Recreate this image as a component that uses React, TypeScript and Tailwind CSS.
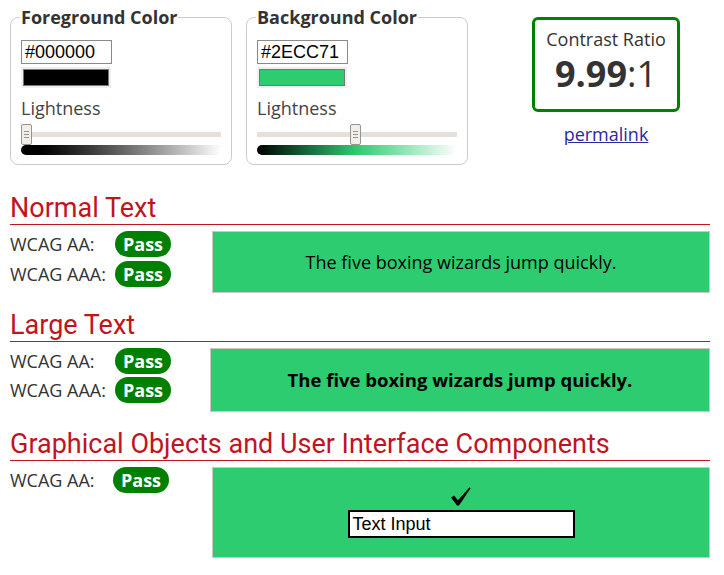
import React from 'react'

const sans = "font-['Open_Sans','Noto_Sans',sans-serif]"
const heading = "font-['Roboto','Liberation_Sans',sans-serif]"
const arial = "font-['Liberation_Sans',Arial,sans-serif]"

function Thumb({ left }: { left: number }) {
  return (
    <div
      className="absolute top-0 w-[11px] h-[21px] bg-[#f1eeea] border border-[#9a948e] rounded-[2px] flex flex-col items-center justify-center gap-[2px]"
      style={{ left }}
    >
      <span className="block w-[5px] h-px bg-[#9a948e]" />
      <span className="block w-[5px] h-px bg-[#9a948e]" />
      <span className="block w-[5px] h-px bg-[#9a948e]" />
    </div>
  )
}

function ColorBox({
  title,
  hex,
  swatch,
  thumbLeft,
  gradient,
  className = '',
}: {
  title: string
  hex: string
  swatch: string
  thumbLeft: number
  gradient: string
  className?: string
}) {
  return (
    <fieldset className={`w-[222px] min-w-0 border border-[#cccccc] rounded-[8px] px-[10px] pt-[11px] pb-[9px] m-0 ${className}`}>
      <legend className="px-[1px] -ml-[1px] text-[18px] leading-[23px] font-bold text-[#333]">{title}</legend>
      <div className={`w-[91px] h-[24px] border border-[#8a8a8a] bg-white px-[3px] text-[18px] leading-[22px] text-black ${arial}`}>
        {hex}
      </div>
      <div className="mt-[3px] w-[90px] h-[21px] bg-[#efefef] p-[2px]">
        <div className="w-full h-full border border-[#767676]" style={{ background: swatch }} />
      </div>
      <div className="mt-[8px] text-[18px] leading-[24px] text-[#444]">Lightness</div>
      <div className="relative mt-[4px] w-[200px] h-[31px]">
        <div className="absolute left-0 right-0 top-[8px] h-[5px] bg-[#e5e0da]" />
        <div className={`absolute left-0 right-0 top-[21px] h-[10px] rounded-l-full ${gradient}`} />
        <Thumb left={thumbLeft} />
      </div>
    </fieldset>
  )
}

function Pass() {
  return (
    <span className="inline-flex items-center justify-center w-[56px] h-[26px] rounded-full bg-[#008000] text-white font-bold text-[18px]">
      Pass
    </span>
  )
}

function Row({ label, labelW = 'w-[105px]' }: { label: string; labelW?: string }) {
  return (
    <div className="flex items-center h-[26px]">
      <span className={`${labelW} text-[18px] text-[#333]`}>{label}</span>
      <Pass />
    </div>
  )
}

function SectionTitle({ children }: { children: React.ReactNode }) {
  return (
    <h2 className={`${heading} text-[27px] leading-[30px] text-[#c0141e] pb-px border-b border-[#c0141e]`}>
      {children}
    </h2>
  )
}

function Check() {
  return (
    <svg width="20" height="19" viewBox="0 0 20 19" className="block">
      <path d="M0 10.5 L3.2 8.6 L6.8 13.2 L18.6 0.2 L19.6 1.2 L8 18.4 L6 18.4 Z" fill="#000" />
    </svg>
  )
}

export default function App() {
  return (
    <div className={`${sans} w-[724px] h-[575px] bg-white pl-[10px] pt-[6px] overflow-hidden`}>
      <div className="w-[700px]">
        <div className="flex items-start">
          <ColorBox title="Foreground Color" hex="#000000" swatch="#000000" thumbLeft={0} gradient="bg-gradient-to-r from-black to-white" />
          <ColorBox
            title="Background Color"
            hex="#2ECC71"
            swatch="#2ecc71"
            thumbLeft={93}
            gradient="bg-[linear-gradient(to_right,#000000,#2ecc71_50%,#ffffff)]"
            className="ml-[14px]"
          />
          <div className="ml-[64px] mt-[11px] flex flex-col items-center">
            <div className="w-[148px] h-[95px] border-[3px] border-[#008000] rounded-[6px] flex flex-col items-center pt-[8px]">
              <div className="text-[18px] leading-[23px] text-[#333]">Contrast Ratio</div>
              <div className="text-[36px] leading-[46px] text-[#333]">
                <span className="font-bold">9.99</span>:1
              </div>
            </div>
            <a href="#" className="mt-[10px] text-[18px] leading-[24px] text-[#2a2a9c] underline">
              permalink
            </a>
          </div>
        </div>

        <section className="mt-[28px]">
          <SectionTitle>Normal Text</SectionTitle>
          <div className="flex mt-[6px]">
            <div className="w-[202px] flex flex-col gap-[4px]">
              <Row label="WCAG AA:" />
              <Row label="WCAG AAA:" />
            </div>
            <div className="w-[498px] h-[62px] border border-[#c8c8c8] bg-[#2ecc71] flex items-center justify-center text-[18px] text-black">
              The five boxing wizards jump quickly.
            </div>
          </div>
        </section>

        <section className="mt-[17px]">
          <SectionTitle>Large Text</SectionTitle>
          <div className="flex mt-[6px]">
            <div className="w-[200px] flex flex-col gap-[3px]">
              <Row label="WCAG AA:" />
              <Row label="WCAG AAA:" />
            </div>
            <div className="w-[500px] h-[64px] border border-[#c8c8c8] bg-[#2ecc71] flex items-center justify-center text-[18.5px] font-bold text-black">
              The five boxing wizards jump quickly.
            </div>
          </div>
        </section>

        <section className="mt-[17px]">
          <SectionTitle>Graphical Objects and User Interface Components</SectionTitle>
          <div className="flex mt-[6px]">
            <div className="w-[202px]">
              <Row label="WCAG AA:" labelW="w-[103px]" />
            </div>
            <div className="w-[498px] h-[91px] border border-[#c8c8c8] bg-[#2ecc71] flex flex-col items-center pt-[19px]">
              <Check />
              <div className={`mt-[4px] w-[227px] h-[28px] border-2 border-black bg-white px-[3px] text-[18px] leading-[24px] text-black ${arial}`}>
                Text Input
              </div>
            </div>
          </div>
        </section>
      </div>
    </div>
  )
}
